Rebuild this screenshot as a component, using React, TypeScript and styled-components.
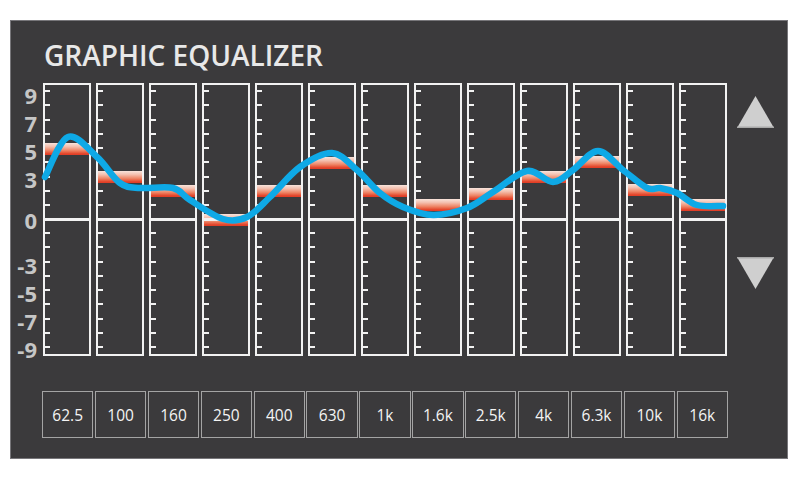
import styled, { createGlobalStyle } from "styled-components";

const GlobalStyle = createGlobalStyle`
  html, body {
    margin: 0;
    padding: 0;
    background: #ffffff;
  }
  body {
    font-family: "Open Sans", "Liberation Sans", sans-serif;
  }
`;

const bands = ["62.5", "100", "160", "250", "400", "630", "1k", "1.6k", "2.5k", "4k", "6.3k", "10k", "16k"];
const gains = [5, 3, 2, 0, 2, 4, 2, 1, 1.8, 3, 4.1, 2.1, 1];

// curve points, relative to the top-left corner of the slider area
const curve: [number, number][] = [
  [45, 177], [68, 137], [97, 157], [120, 183], [140, 188], [173, 188], [190, 200], [223, 219],
  [247, 217], [270, 197], [300, 167], [332, 153], [357, 170], [380, 193], [403, 207], [433, 215],
  [467, 208], [493, 192], [527, 171], [553, 182], [573, 170], [598, 151], [623, 170], [647, 188],
  [660, 188], [677, 193], [697, 205], [723, 206],
].map(([x, y]) => [x - 43, y - 83] as [number, number]);

const scale = [
  { label: "9", gap: 0 },
  { label: "7", gap: 0 },
  { label: "5", gap: 0 },
  { label: "3", gap: 0 },
  { label: "0", gap: 13 },
  { label: "-3", gap: 17 },
  { label: "-5", gap: 0 },
  { label: "-7", gap: 0 },
  { label: "-9", gap: 0 },
];

const ZERO_Y = 134.5;
const PX_PER_DB = 14.1;
const BAR_H = 12;

function smoothPath(pts: [number, number][]) {
  let d = `M ${pts[0][0]} ${pts[0][1]}`;
  for (let i = 0; i < pts.length - 1; i++) {
    const p0 = pts[i - 1] || pts[i];
    const p1 = pts[i];
    const p2 = pts[i + 1];
    const p3 = pts[i + 2] || p2;
    const c1x = p1[0] + (p2[0] - p0[0]) / 6;
    const c1y = p1[1] + (p2[1] - p0[1]) / 6;
    const c2x = p2[0] - (p3[0] - p1[0]) / 6;
    const c2y = p2[1] - (p3[1] - p1[1]) / 6;
    d += ` C ${c1x.toFixed(1)} ${c1y.toFixed(1)}, ${c2x.toFixed(1)} ${c2y.toFixed(1)}, ${p2[0]} ${p2[1]}`;
  }
  return d;
}

const Panel = styled.div`
  box-sizing: border-box;
  margin: 20px 0 0 10px;
  width: 778px;
  height: 439px;
  background: #3b3a3c;
  border: 1px solid #77767a;
  padding-top: 20px;
`;

const Title = styled.h1`
  margin: 0 0 14px 33px;
  font-family: "Open Sans", "Liberation Sans", sans-serif;
  font-size: 28px;
  line-height: 28px;
  font-weight: 600;
  letter-spacing: 0;
  color: #e8e8e8;
`;

const MainRow = styled.div`
  display: flex;
  align-items: flex-start;
`;

const Scale = styled.div`
  width: 26px;
  margin-right: 6px;
  margin-top: -2px;
  display: flex;
  flex-direction: column;
`;

const ScaleLabel = styled.span<{ $gap: number }>`
  display: block;
  margin-top: ${(p) => p.$gap}px;
  height: 28px;
  line-height: 28px;
  text-align: right;
  font-family: "Open Sans", "Liberation Sans", sans-serif;
  font-size: 22px;
  font-weight: 700;
  color: #c6c6c6;
`;

const Sliders = styled.div`
  position: relative;
  display: grid;
  grid-template-columns: repeat(13, 48px);
  column-gap: 5px;
  height: 273px;
`;

const Column = styled.div`
  position: relative;
  box-sizing: border-box;
  border: 2px solid #f2f2f2;
  display: flex;
  flex-direction: column;
`;

const Half = styled.div<{ $upper?: boolean }>`
  box-sizing: border-box;
  height: 133px;
  display: flex;
  flex-direction: column;
  justify-content: space-between;
  padding: ${(p) => (p.$upper ? "5px 0 12px" : "11px 0 6px")};
`;

const Tick = styled.span`
  display: block;
  width: 5px;
  height: 2px;
  background: #f2f2f2;
`;

const ZeroLine = styled.div`
  position: relative;
  z-index: 2;
  height: 3px;
  background: #f2f2f2;
`;

const Level = styled.div`
  position: absolute;
  left: 0;
  right: 0;
  height: ${BAR_H}px;
  z-index: 1;
  background: linear-gradient(
    to bottom,
    #f8e4dc 0%,
    #f4bfae 30%,
    #ee8667 62%,
    #e4482d 88%,
    #e03a24 100%
  );
`;

const CurveLayer = styled.svg`
  position: absolute;
  left: 0;
  top: 0;
  z-index: 3;
  overflow: visible;
  pointer-events: none;
`;

const Arrows = styled.div`
  margin-left: 10px;
  padding-top: 13px;
  display: flex;
  flex-direction: column;
  gap: 129px;
`;

const BandRow = styled.div`
  display: grid;
  grid-template-columns: repeat(13, 1fr);
  column-gap: 1.5px;
  width: 686px;
  margin: 28px 0 0 31px;
`;

const BandBox = styled.div`
  box-sizing: border-box;
  height: 47px;
  border: 1px solid #a4a4a4;
  display: flex;
  align-items: center;
  justify-content: center;
  font-family: "Open Sans", "Liberation Sans", sans-serif;
  font-size: 15.5px;
  color: #f4f4f4;
`;

function ArrowIcon({ down }: { down?: boolean }) {
  return (
    <svg width="37" height="32" viewBox="0 0 37 32">
      {down ? (
        <>
          <polygon points="0,0 37,0 18.5,32" fill="#cfcfcf" />
          <rect x="0" y="0" width="37" height="1.5" fill="#a9a9a9" />
        </>
      ) : (
        <>
          <polygon points="18.5,0 37,32 0,32" fill="#cfcfcf" />
          <rect x="0" y="30.5" width="37" height="1.5" fill="#a9a9a9" />
        </>
      )}
    </svg>
  );
}

export default function App() {
  return (
    <>
      <GlobalStyle />
      <Panel>
        <Title>GRAPHIC EQUALIZER</Title>
        <MainRow>
          <Scale>
            {scale.map((s) => (
              <ScaleLabel key={s.label} $gap={s.gap}>
                {s.label}
              </ScaleLabel>
            ))}
          </Scale>
          <Sliders>
            {gains.map((g, i) => (
              <Column key={bands[i]}>
                <Half $upper>
                  {Array.from({ length: 9 }).map((_, t) => (
                    <Tick key={t} />
                  ))}
                </Half>
                <ZeroLine />
                <Half>
                  {Array.from({ length: 9 }).map((_, t) => (
                    <Tick key={t} />
                  ))}
                </Half>
                <Level style={{ top: ZERO_Y - g * PX_PER_DB - BAR_H / 2 }} />
              </Column>
            ))}
            <CurveLayer width="684" height="273">
              <path
                d={smoothPath(curve)}
                fill="none"
                stroke="#0ea9e6"
                strokeWidth="6.5"
                strokeLinecap="round"
                strokeLinejoin="round"
              />
            </CurveLayer>
          </Sliders>
          <Arrows>
            <ArrowIcon />
            <ArrowIcon down />
          </Arrows>
        </MainRow>
        <BandRow>
          {bands.map((b) => (
            <BandBox key={b}>{b}</BandBox>
          ))}
        </BandRow>
      </Panel>
    </>
  );
}
